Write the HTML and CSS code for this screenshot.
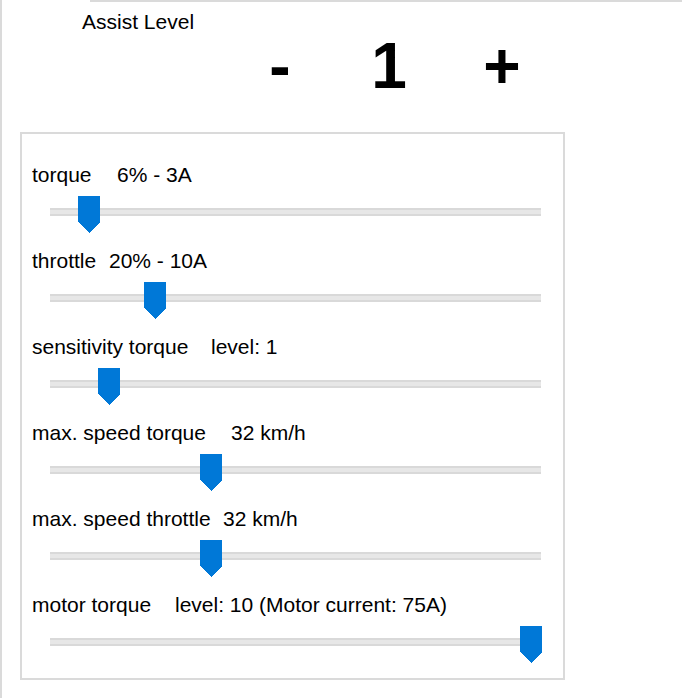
FILE: index.html
```
<!DOCTYPE html>
<html>
<head>
<meta charset="utf-8">
<link rel="stylesheet" href="styles.css">
</head>
<body>
<div class="frame">
  <div class="topline"></div>
  <div class="title">Assist Level</div>
  <div class="controls">
    <span class="ctl ctl-minus">-</span>
    <span class="ctl ctl-level">1</span>
    <span class="ctl ctl-plus">+</span>
  </div>
  <div class="group">
    <div class="row">
      <div class="label"><span class="name w-torque">torque</span><span class="value">6% - 3A</span></div>
      <div class="slider"><div class="track"></div><svg class="thumb" style="left:28px" width="22" height="37" viewBox="0 0 22 37"><polygon points="0,0 22,0 22,26 11,37 0,26"/></svg></div>
    </div>
    <div class="row">
      <div class="label"><span class="name w-throttle">throttle</span><span class="value">20% - 10A</span></div>
      <div class="slider"><div class="track"></div><svg class="thumb" style="left:94px" width="22" height="37" viewBox="0 0 22 37"><polygon points="0,0 22,0 22,26 11,37 0,26"/></svg></div>
    </div>
    <div class="row">
      <div class="label"><span class="name w-sens">sensitivity torque</span><span class="value">level: 1</span></div>
      <div class="slider"><div class="track"></div><svg class="thumb" style="left:48px" width="22" height="37" viewBox="0 0 22 37"><polygon points="0,0 22,0 22,26 11,37 0,26"/></svg></div>
    </div>
    <div class="row">
      <div class="label"><span class="name w-mst">max. speed torque</span><span class="value">32 km/h</span></div>
      <div class="slider"><div class="track"></div><svg class="thumb" style="left:150px" width="22" height="37" viewBox="0 0 22 37"><polygon points="0,0 22,0 22,26 11,37 0,26"/></svg></div>
    </div>
    <div class="row">
      <div class="label"><span class="name w-msth">max. speed throttle</span><span class="value">32 km/h</span></div>
      <div class="slider"><div class="track"></div><svg class="thumb" style="left:150px" width="22" height="37" viewBox="0 0 22 37"><polygon points="0,0 22,0 22,26 11,37 0,26"/></svg></div>
    </div>
    <div class="row">
      <div class="label"><span class="name w-motor">motor torque</span><span class="value">level: 10 (Motor current: 75A)</span></div>
      <div class="slider"><div class="track"></div><svg class="thumb" style="left:470px" width="22" height="37" viewBox="0 0 22 37"><polygon points="0,0 22,0 22,26 11,37 0,26"/></svg></div>
    </div>
  </div>
</div>
</body>
</html>
```
FILE: styles.css
```
html, body {
  margin: 0;
  padding: 0;
  background: #ffffff;
}
body {
  font-family: "Liberation Sans", Arial, sans-serif;
  color: #000000;
}
.frame {
  border-left: 2px solid #dadada;
  height: 698px;
  box-sizing: border-box;
  overflow: hidden;
}
.topline {
  margin-left: 88px;
  height: 2px;
  background: #dadada;
}
.title {
  margin-top: 8px;
  margin-left: 80px;
  font-size: 21px;
  line-height: 24px;
  height: 24px;
}
.controls {
  display: flex;
  height: 64px;
  font-size: 64px;
  font-weight: bold;
  line-height: 64px;
}
.ctl {
  display: block;
  width: 60px;
  text-align: center;
}
.ctl-minus { margin-left: 248px; }
.ctl-level { margin-left: 49px; }
.ctl-plus { margin-left: 53px; }
.group {
  margin-top: 34px;
  margin-left: 18px;
  width: 545px;
  height: 548px;
  box-sizing: border-box;
  border: 2px solid #dadada;
  padding: 29px 0 0 10px;
}
.row {
  height: 86px;
}
.label {
  display: flex;
  font-size: 21px;
  line-height: 24px;
  height: 24px;
  white-space: nowrap;
}
.name {
  display: block;
}
.w-torque { width: 85px; }
.w-throttle { width: 77px; }
.w-sens { width: 179px; }
.w-mst { width: 199px; }
.w-msth { width: 191px; }
.w-motor { width: 143px; }
.slider {
  position: relative;
  margin-top: 9px;
  margin-left: 18px;
  width: 491px;
  height: 37px;
}
.track {
  position: absolute;
  top: 12px;
  left: 0;
  right: 0;
  height: 4px;
  border-top: 2px solid #d9d9d9;
  border-bottom: 2px solid #d9d9d9;
  background: #e7e7e7;
}
.thumb {
  position: absolute;
  top: 0;
  display: block;
  fill: #0078d7;
  shape-rendering: crispEdges;
}
```
